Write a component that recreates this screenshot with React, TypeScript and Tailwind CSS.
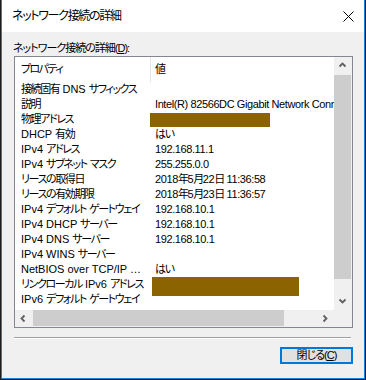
const rows: { name: string; value?: string; redact?: "short" | "long" }[] = [
  { name: "接続固有 DNS サフィックス" },
  { name: "説明", value: "Intel(R) 82566DC Gigabit Network Connection" },
  { name: "物理アドレス", redact: "short" },
  { name: "DHCP 有効", value: "はい" },
  { name: "IPv4 アドレス", value: "192.168.11.1" },
  { name: "IPv4 サブネット マスク", value: "255.255.0.0" },
  { name: "リースの取得日", value: "2018年5月22日 11:36:58" },
  { name: "リースの有効期限", value: "2018年5月23日 11:36:57" },
  { name: "IPv4 デフォルト ゲートウェイ", value: "192.168.10.1" },
  { name: "IPv4 DHCP サーバー", value: "192.168.10.1" },
  { name: "IPv4 DNS サーバー", value: "192.168.10.1" },
  { name: "IPv4 WINS サーバー" },
  { name: "NetBIOS over TCP/IP 有効", value: "はい" },
  { name: "リンクローカル IPv6 アドレス", redact: "long" },
  { name: "IPv6 デフォルト ゲートウェイ" },
];

const CJK = /([\u3000-\u30ff\u4e00-\u9fff]+)/;

// the dialog font has narrow kana, so squeeze only the Japanese runs
function Jp({ text }: { text: string }) {
  return (
    <>
      {text.split(CJK).map((part, i) =>
        i % 2 === 1 ? (
          <span key={i} className="tracking-[-1.4px]">
            {part}
          </span>
        ) : (
          part
        ),
      )}
    </>
  );
}

function Chevron({ dir }: { dir: "up" | "down" | "left" | "right" }) {
  const d = {
    up: "M1.5 5.5 L4.5 2.5 L7.5 5.5",
    down: "M1.5 2.5 L4.5 5.5 L7.5 2.5",
    left: "M5.5 1.5 L2.5 4.5 L5.5 7.5",
    right: "M2.5 1.5 L5.5 4.5 L2.5 7.5",
  }[dir];
  return (
    <svg width="9" height="9" viewBox="0 0 9 9">
      <path d={d} fill="none" stroke="#606060" strokeWidth="1.8" />
    </svg>
  );
}

export default function App() {
  return (
    <div className="w-[366px] h-[380px] bg-[#1b1b1b] px-px pb-px font-['Liberation_Sans','Noto_Sans_CJK_JP',sans-serif] text-[11px] text-black [font-feature-settings:'palt'_1]">
      <div className="flex h-full flex-col border-x border-b border-[#1883d7] bg-[#f0f0f0]">
        <div className="flex h-[32px] items-center justify-between bg-white pl-[10px] pr-[10px]">
          <span className="text-[12px] leading-[16px] tracking-[-1.3px]">ネットワーク接続の詳細</span>
          <svg width="11" height="11" viewBox="0 0 11 11">
            <path d="M0.5 0.5 L10.5 10.5 M10.5 0.5 L0.5 10.5" stroke="#000" strokeWidth="1" />
          </svg>
        </div>

        <div className="flex flex-1 flex-col pl-[12px] pr-[11px]">
          <div className="mt-[8px] ml-[-1px] h-[16px] leading-[16px] tracking-[-1px]">
            ネットワーク接続の詳細(<span className="underline">D</span>):
          </div>

          <div className="flex h-[272px] flex-col border border-[#828790] bg-[#f0f0f0]">
            <div className="flex h-[253px]">
              <div className="w-[319px] overflow-hidden bg-white">
                <div className="flex h-[25px] items-center">
                  <div className="w-[135px] shrink-0 pl-[6px] tracking-[-1.6px]">プロパティ</div>
                  <div className="h-full w-px shrink-0 bg-[#e5e5e5]" />
                  <div className="pl-[4px]">値</div>
                </div>
                {rows.map((row) => (
                  <div key={row.name} className="flex h-[15px] items-center leading-[15px]">
                    <div className="w-[136px] shrink-0 truncate pl-[6px] pr-[4px]">
                      <Jp text={row.name} />
                    </div>
                    <div className="whitespace-nowrap pl-[4px] tracking-[-0.4px]">
                      {row.value && <Jp text={row.value} />}
                      {row.redact === "short" && <div className="ml-[-5px] mt-[1px] h-[14px] w-[120px] bg-[#8b6300]" />}
                      {row.redact === "long" && <div className="-ml-[3px] mt-[4px] h-[19px] w-[147px] bg-[#8b6300]" />}
                    </div>
                  </div>
                ))}
              </div>
              <div className="flex w-[17px] flex-col">
                <div className="flex h-[17px] items-center justify-center">
                  <Chevron dir="up" />
                </div>
                <div className="mt-px h-[204px] bg-[#cdcdcd]" />
                <div className="flex-1" />
                <div className="flex h-[17px] items-center justify-center">
                  <Chevron dir="down" />
                </div>
              </div>
            </div>
            <div className="flex h-[16px]">
              <div className="flex w-[319px] items-center">
                <div className="flex h-full w-[17px] items-center justify-center">
                  <Chevron dir="left" />
                </div>
                <div className="ml-px h-full w-[251px] bg-[#cdcdcd]" />
                <div className="flex-1" />
                <div className="flex h-full w-[17px] items-center justify-center">
                  <Chevron dir="right" />
                </div>
              </div>
            </div>
          </div>

          <div className="mt-[9px] mr-[2px] h-[2px] border-t border-[#a0a0a0] border-b border-b-white" />

          <button className="mt-[8px] flex h-[17px] w-[73px] items-center justify-center self-end border-2 border-[#0078d7] bg-[#e1e1e1] leading-[13px] tracking-[-1px]">
            閉じる(<span className="underline">C</span>)
          </button>
        </div>
      </div>
    </div>
  );
}
